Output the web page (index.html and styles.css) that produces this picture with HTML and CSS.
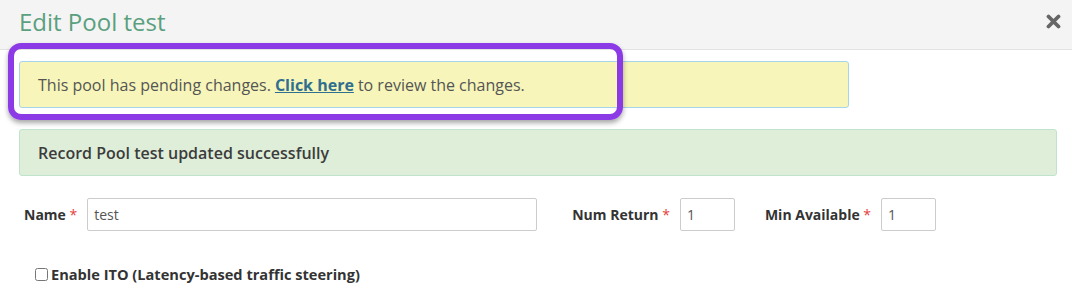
FILE: index.html
```html
<!DOCTYPE html>
<html>
<head>
<meta charset="UTF-8">
<title>Edit Pool test</title>
<link rel="stylesheet" href="styles.css">
</head>
<body>
<div class="modal">
  <div class="modal-header">
    <h4 class="modal-title">Edit Pool test</h4>
    <a class="close" href="#">
      <svg width="15" height="15" viewBox="0 0 15 15"><path d="M2.5 2.5 L12.5 12.5 M12.5 2.5 L2.5 12.5" stroke="#666" stroke-width="3.8" stroke-linecap="round"/></svg>
    </a>
  </div>
  <div class="modal-body">
    <div class="alert alert-pending">This pool has pending changes. <a href="#">Click here</a> to review the changes.</div>
    <div class="alert alert-success">Record Pool test updated successfully</div>
    <div class="form-row">
      <label class="lbl lbl-name">Name <span class="req">*</span></label>
      <input class="field field-name" type="text" value="test">
      <label class="lbl lbl-num">Num Return <span class="req">*</span></label>
      <input class="field field-small" type="text" value="1">
      <label class="lbl lbl-min">Min Available <span class="req">*</span></label>
      <input class="field field-small" type="text" value="1">
    </div>
    <div class="check-row">
      <input type="checkbox" id="ito">
      <label for="ito">Enable ITO (Latency-based traffic steering)</label>
    </div>
  </div>
  <div class="highlight"></div>
</div>
</body>
</html>
```
FILE: styles.css
```css
body {
	margin: 0;
	font-family: "Open Sans", "Noto Sans", sans-serif;
	color: #333;
	background: #fff;
}
.modal {
	position: relative;
	width: 1072px;
	height: 308px;
	overflow: hidden;
}
.modal-header {
	height: 50px;
	background: #f4f4f4;
	border-bottom: 1px solid #e3e3e3;
	box-sizing: border-box;
	display: flex;
	align-items: center;
	justify-content: space-between;
	padding: 0 11px 0 19px;
}
.modal-title {
	margin: 0;
	font-size: 24px;
	font-weight: normal;
	color: #5aa07e;
	position: relative;
	top: -3px;
}
.close {
	display: flex;
	position: relative;
	top: -3px;
}
.modal-body {
	padding: 11px 15px 0 19px;
}
.alert {
	box-sizing: border-box;
	height: 47px;
	border-radius: 3px;
	padding: 0 18px;
	display: flex;
	align-items: center;
	font-size: 16px;
}
.alert-pending {
	width: 830px;
	background: #f7f5b9;
	border: 1px solid #a6d5ea;
	color: #555;
}
.alert-pending a {
	color: #2f6f8f;
	font-weight: bold;
	text-decoration: underline;
	margin: 0 4px;
}
.alert-success {
	margin-top: 21px;
	background: #dfeed8;
	border: 1px solid #bfe3cc;
	color: #3c3c3c;
	font-weight: 600;
}
.highlight {
	position: absolute;
	left: 8px;
	top: 43px;
	width: 615px;
	height: 77px;
	box-sizing: border-box;
	border: 6px solid #8b3ae5;
	border-radius: 13px;
	box-shadow: 0 3px 5px rgba(0, 0, 0, 0.35);
}
.form-row {
	display: flex;
	align-items: center;
	margin-top: 22px;
	padding-left: 5px;
}
.lbl {
	font-size: 14px;
	font-weight: bold;
	color: #333;
}
.req {
	color: #e5403a;
	font-weight: normal;
}
.lbl-name {
	margin-right: 10px;
}
.lbl-num {
	margin-left: 35px;
	margin-right: 10px;
}
.lbl-min {
	margin-left: 30px;
	margin-right: 10px;
}
.field {
	box-sizing: border-box;
	height: 33px;
	border: 1px solid #ccc;
	border-radius: 2px;
	padding: 0 6px;
	font-family: "Open Sans", "Noto Sans", sans-serif;
	font-size: 14px;
	color: #555;
}
.field-name {
	width: 450px;
}
.field-small {
	width: 55px;
}
.check-row {
	display: flex;
	align-items: center;
	margin-top: 33px;
	padding-left: 15px;
}
.check-row input {
	margin: 0 3px 0 1px;
	width: 13px;
	height: 13px;
}
.check-row label {
	font-size: 14.6px;
	font-weight: bold;
	color: #333;
}
```
